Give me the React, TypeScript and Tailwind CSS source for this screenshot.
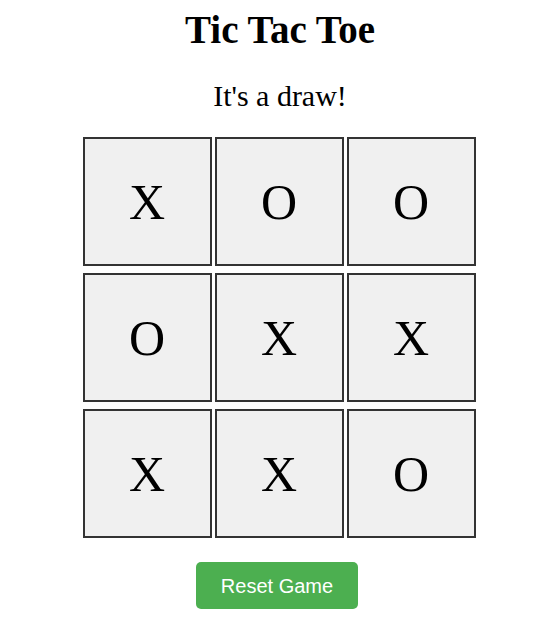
const board = ["X", "O", "O", "O", "X", "X", "X", "X", "O"]

export default function App() {
  const rows = [board.slice(0, 3), board.slice(3, 6), board.slice(6, 9)]
  return (
    <main className="flex flex-col items-center bg-white text-black" style={{ fontFamily: '"Liberation Serif", serif' }}>
      <h1 className="mt-[8px] text-[39px] font-bold leading-[44px]">Tic Tac Toe</h1>
      <p className="mt-[26px] text-[30px] leading-[36px]">It&apos;s a draw!</p>
      <div className="mr-[2px] mt-[23px] flex flex-col gap-y-[7px]">
        {rows.map((row, r) => (
          <div key={r} className="flex gap-x-[3px]">
            {row.map((cell, c) => (
              <button
                key={c}
                className="flex h-[129px] w-[129px] items-center justify-center border-2 border-[#333] bg-[#f0f0f0] text-[50px] leading-none"
              >
                {cell}
              </button>
            ))}
          </div>
        ))}
      </div>
      <button
        className="mr-[6px] mt-[24px] h-[47px] w-[162px] rounded-[5px] bg-[#4caf50] text-[20px] text-white"
        style={{ fontFamily: '"Liberation Sans", Arial, sans-serif' }}
      >
        Reset Game
      </button>
    </main>
  )
}
